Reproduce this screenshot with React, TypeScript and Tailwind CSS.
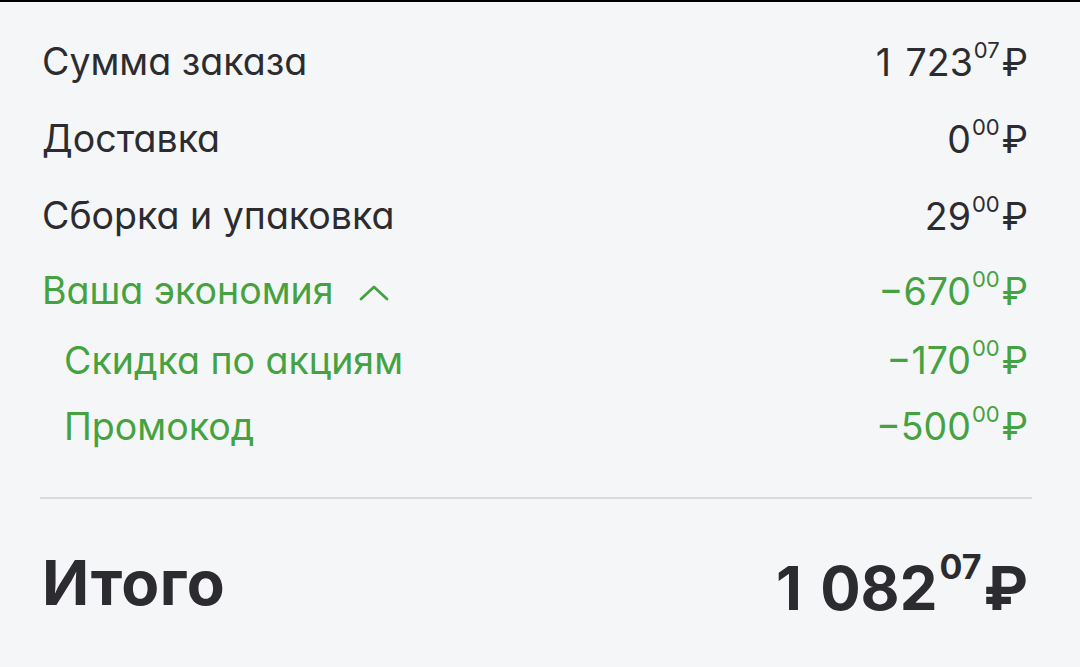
import type { ReactNode } from "react";

interface Line {
  label: string;
  rub: string;
  kop: string;
  tone: "dark" | "green";
  sub?: boolean;
  toggle?: boolean;
}

const lines: Line[] = [
  { label: "Сумма заказа", rub: "1 723", kop: "07", tone: "dark" },
  { label: "Доставка", rub: "0", kop: "00", tone: "dark" },
  { label: "Сборка и упаковка", rub: "29", kop: "00", tone: "dark" },
  { label: "Ваша экономия", rub: "−670", kop: "00", tone: "green", toggle: true },
  { label: "Скидка по акциям", rub: "−170", kop: "00", tone: "green", sub: true },
  { label: "Промокод", rub: "−500", kop: "00", tone: "green", sub: true },
];

function Price({ rub, kop, big }: { rub: string; kop: string; big?: boolean }) {
  return (
    <span className="inline-flex items-start leading-none">
      <span className="whitespace-pre [word-spacing:4px]">{rub}</span>
      <span className={big ? "ml-[2px] -mt-[8px] text-[34px]" : "ml-[1px] -mt-[5px] text-[22px]"}>{kop}</span>
      <span className={big ? "ml-[2px] font-bold" : "ml-[2px]"}>₽</span>
    </span>
  );
}

function Chevron() {
  return (
    <svg width="32" height="18" viewBox="0 0 32 18" fill="none" className="ml-[24px] mt-[2px]">
      <path d="M3 15 L16 3 L29 15" stroke="currentColor" strokeWidth="2.8" strokeLinecap="round" strokeLinejoin="round" />
    </svg>
  );
}

function Row({ line }: { line: Line }) {
  const color = line.tone === "green" ? "text-[#45a240]" : "text-[#2c2c30]";
  const height = line.sub ? "h-[66px]" : line.toggle ? "h-[73px]" : "h-[77px]";
  const label: ReactNode = line.label;
  return (
    <div className={`flex items-center justify-between ${height} ${color}`}>
      <div className={`flex items-center ${line.sub ? "pl-[22px]" : ""}`}>
        {label}
        {line.toggle && <Chevron />}
      </div>
      <Price rub={line.rub} kop={line.kop} />
    </div>
  );
}

export default function App() {
  return (
    <div
      className="min-h-[667px] w-[1080px] border-t-2 border-black bg-[#f5f6f8] [font-feature-settings:'cv11'] text-[37.5px]"
      style={{ fontFamily: "Inter, 'Noto Sans', sans-serif" }}
    >
      <div className="pl-[42px] pr-[52px] pt-[22px]">
        {lines.map((l) => (
          <Row key={l.label} line={l} />
        ))}
      </div>
      <div className="ml-[40px] mr-[48px] mt-[37px] h-[2px] bg-[#d9dadd]" />
      <div className="flex h-[176px] items-center justify-between pb-[8px] pl-[42px] pr-[52px] text-[#2c2c30]">
        <span className="text-[62px] font-bold leading-none tracking-[0.5px]">Итого</span>
        <span className="mt-[10px] text-[60px] font-bold">
          <Price rub="1 082" kop="07" big />
        </span>
      </div>
    </div>
  );
}
